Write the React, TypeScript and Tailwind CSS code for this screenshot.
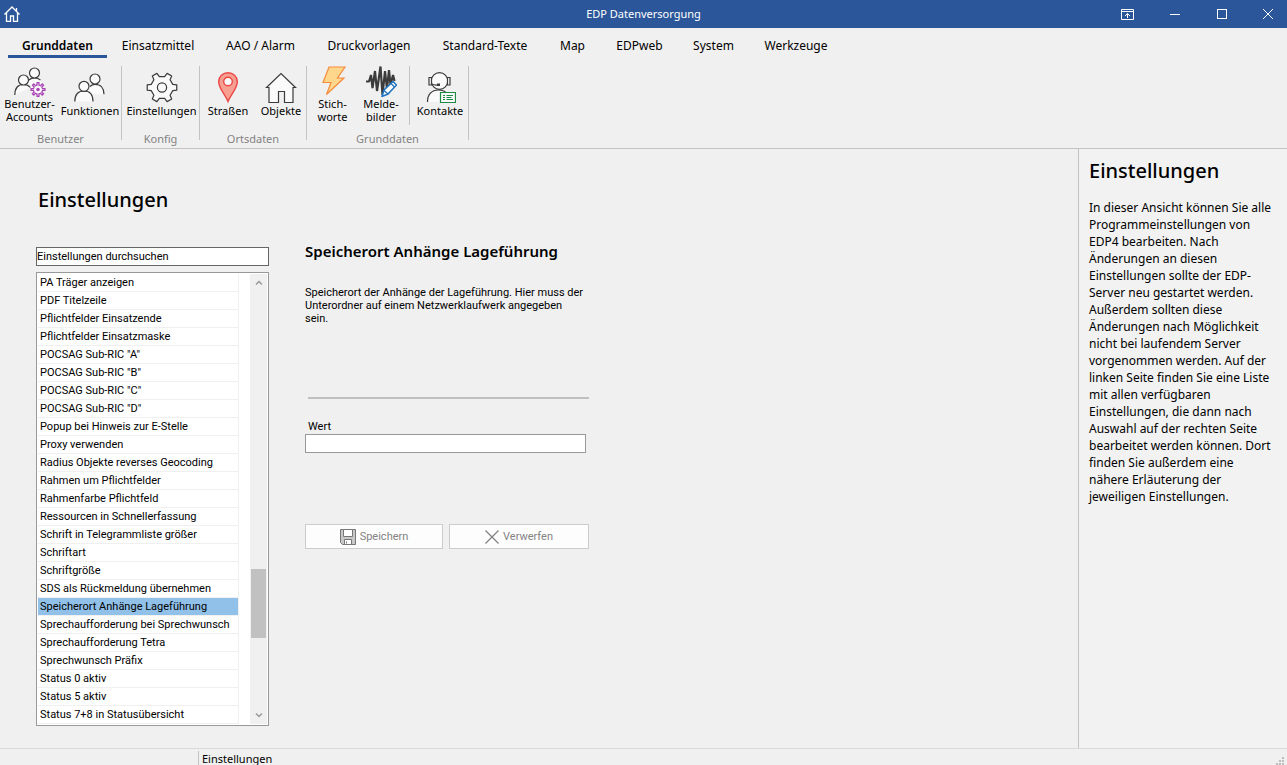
import type { ReactNode } from "react";

const tabs = [
  { label: "Grunddaten", width: "w-[99px]" },
  { label: "Einsatzmittel", width: "w-[102px]" },
  { label: "AAO / Alarm", width: "w-[103px]" },
  { label: "Druckvorlagen", width: "w-[114px]" },
  { label: "Standard-Texte", width: "w-[118px]" },
  { label: "Map", width: "w-[57px]" },
  { label: "EDPweb", width: "w-[77px]" },
  { label: "System", width: "w-[71px]" },
  { label: "Werkzeuge", width: "w-[94px]" },
];

const settings = [
  "PA Träger anzeigen",
  "PDF Titelzeile",
  "Pflichtfelder Einsatzende",
  "Pflichtfelder Einsatzmaske",
  'POCSAG Sub-RIC "A"',
  'POCSAG Sub-RIC "B"',
  'POCSAG Sub-RIC "C"',
  'POCSAG Sub-RIC "D"',
  "Popup bei Hinweis zur E-Stelle",
  "Proxy verwenden",
  "Radius Objekte reverses Geocoding",
  "Rahmen um Pflichtfelder",
  "Rahmenfarbe Pflichtfeld",
  "Ressourcen in Schnellerfassung",
  "Schrift in Telegrammliste größer",
  "Schriftart",
  "Schriftgröße",
  "SDS als Rückmeldung übernehmen",
  "Speicherort Anhänge Lageführung",
  "Sprechaufforderung bei Sprechwunsch",
  "Sprechaufforderung Tetra",
  "Sprechwunsch Präfix",
  "Status 0 aktiv",
  "Status 5 aktiv",
  "Status 7+8 in Statusübersicht",
];

const selected = "Speicherort Anhänge Lageführung";

/** Outline of a cog wheel around (cx, cy). */
function gearPath(cx: number, cy: number, inner: number, outer: number, teeth: number) {
  const step = 360 / teeth;
  const corners: [number, number][] = [
    [-0.27, inner],
    [-0.17, outer],
    [0.17, outer],
    [0.27, inner],
  ];
  const points: string[] = [];
  for (let i = 0; i < teeth; i++) {
    for (const [offset, radius] of corners) {
      const angle = ((i + offset) * step * Math.PI) / 180;
      points.push(`${(cx + radius * Math.cos(angle)).toFixed(2)} ${(cy + radius * Math.sin(angle)).toFixed(2)}`);
    }
  }
  return `M${points.join("L")}Z`;
}

function Icon({ children }: { children: ReactNode }) {
  return (
    <svg
      className="size-8 shrink-0"
      viewBox="0 0 32 32"
      fill="#fafafa"
      stroke="#3b3b3b"
      strokeWidth="1.2"
      aria-hidden="true"
    >
      {children}
    </svg>
  );
}

function AccountsIcon() {
  return (
    <Icon>
      <path d="M13 15.500c2-2.300 4-3 7-3s5.500 1 7.500 3.500v7H17z" stroke="none" />
      <path d="M15 15c1.500-1.500 3-2.200 5.500-2.200s4.500.8 6 2.400" fill="none" />
      <circle cx="20.500" cy="8" r="5" />
      <path d="M.8 30c0-7 3.500-10.500 8.700-10.500 3 0 5.200 1 6.800 3" />
      <circle cx="9.500" cy="15" r="5" />
      <path d={gearPath(24, 24.5, 4.6, 7, 8)} stroke="#a946b5" strokeWidth="1.300" />
      <circle cx="24" cy="24.500" r="1.800" fill="#a946b5" stroke="none" />
    </Icon>
  );
}

function UsersIcon() {
  return (
    <Icon>
      <path d="M15 15c1.500-1.800 3.500-2.700 6-2.700 5.500 0 9 3.700 9 10H17z" stroke="none" />
      <path d="M16 14.500c1.500-1.500 3-2.200 5-2.200 5.500 0 9 3.700 9 10" fill="none" />
      <circle cx="21" cy="7" r="5" />
      <path d="M.8 29.500c0-7 3.500-10.500 9.200-10.500s9 3.500 9 10.500" />
      <circle cx="10" cy="14.300" r="5" />
    </Icon>
  );
}

function GearIcon() {
  return (
    <Icon>
      <path d={gearPath(16, 15.5, 11.2, 15, 6)} strokeLinejoin="round" />
      <circle cx="16" cy="15.500" r="4.600" />
    </Icon>
  );
}

function PinIcon() {
  return (
    <Icon>
      <g stroke="#ea4747" strokeWidth="1.400">
        <path
          d="M16 29.500C13.500 22.500 6.700 17 6.700 9.800 6.700 4.500 10.800.8 16 .8s9.300 3.700 9.300 9C25.300 17 18.500 22.500 16 29.500z"
          fill="#f79f90"
        />
        <circle cx="16" cy="9.500" r="4.300" fill="#fafafa" />
      </g>
    </Icon>
  );
}

function HouseIcon() {
  return (
    <Icon>
      <path d="M1.500 15.500 16 1.500 30.500 15.500H28V30.500h-8.500V19.500h-6v11H4V15.500z" />
    </Icon>
  );
}

function BoltIcon() {
  return (
    <Icon>
      <path d="M12 2h16l-7.500 11h6.500L9.500 29.500 14 17.500H6z" fill="#ffd78c" stroke="#f58b3c" />
    </Icon>
  );
}

function WaveIcon() {
  return (
    <Icon>
      <path
        d="M1 16.500h3L6 10l1.500 13L10 6l2 20L15.500 1.500 17.500 30 20 6l2 18L24 5l1.500 15L28 10l1.500 6"
        fill="none"
        strokeWidth="2.200"
        strokeLinejoin="bevel"
      />
      <path d="m17 31.500 2-6.500L28 16.500l3.500 3.500-8.500 9z" stroke="#1e74c0" strokeWidth="1.500" />
      <path d="m26 18.500 3.500 3.500M19 25.500l4 3.500" stroke="#1e74c0" fill="none" />
    </Icon>
  );
}

function ContactIcon() {
  return (
    <Icon>
      <path d="M3.500 30c0-7.500 4.500-12 12-12 3.500 0 6 .8 8 2.500V30z" stroke="none" />
      <path d="M3.500 30c0-7.500 4-12 11-12 3 0 5 .6 7 1.800" fill="none" />
      <circle cx="15.500" cy="9" r="8.300" />
      <path d="M7.500 5.500H5v7.500h2.500zM23.500 5.500H26v7.500h-2.500z" />
      <path d="M7.500 12c2 1 4 1.200 6 1" fill="none" />
      <path d="M13 11.500h3v2.500h-3z" fill="#3b3b3b" stroke="none" />
      <path d="M16.500 20.500h15v10h-15z" stroke="#1f8a43" />
      <path d="M19 23.500h2M22.500 23.500h6.500M19 25.500h2M22.500 25.500h5M19 27.500h2M22.500 27.500h6.500" stroke="#1f8a43" />
    </Icon>
  );
}

function RibbonButton({ icon, lines, width }: { icon: ReactNode; lines: string[]; width: string }) {
  return (
    <button
      type="button"
      className={`flex h-full flex-col items-center justify-center whitespace-nowrap text-[11px] leading-[13px] text-black ${width}`}
    >
      {icon}
      {lines.map((line) => (
        <span key={line}>{line}</span>
      ))}
    </button>
  );
}

function RibbonGroup({ label, width, children }: { label: string; width: string; children: ReactNode }) {
  return (
    <section className={`flex flex-col border-r border-[#c3c3c3] ${width}`} aria-label={label}>
      <div className="flex h-14">{children}</div>
      <div className="mt-3.5 h-1 text-center text-[11px] leading-[6px] text-[#838383]">{label}</div>
    </section>
  );
}

function TitleBar() {
  return (
    <header className="grid h-7 shrink-0 grid-cols-[1fr_auto_1fr] items-center bg-[#2b579a] text-white">
      <button type="button" aria-label="Startseite" className="ml-1 w-4">
        <svg className="size-4" viewBox="0 0 16 16" fill="none" stroke="currentColor" strokeWidth="1.300">
          <path d="M.5 8.500 8 1l7.500 7.500M2.500 7v8.300h4V10h3v5.300h4V7M12.500 5V2" />
        </svg>
      </button>
      <h1 className="text-[11px]">EDP Datenversorgung</h1>
      <div className="flex justify-end">
        <button type="button" aria-label="Menüband ausblenden" className="flex h-7 w-[47px] items-center justify-center">
          <svg className="h-[11px] w-[13px]" viewBox="0 0 13 11" fill="none" stroke="currentColor">
            <path d="M.5.500h12v10H.500zM.500 2.500h12M6.500 9V4.500M4 7l2.500-2.500L9 7" />
          </svg>
        </button>
        <button type="button" aria-label="Minimieren" className="flex h-7 w-[47px] items-center justify-center">
          <span className="h-px w-2.5 bg-white" />
        </button>
        <button type="button" aria-label="Maximieren" className="flex h-7 w-[47px] items-center justify-center">
          <span className="size-2.5 border border-white" />
        </button>
        <button type="button" aria-label="Schließen" className="flex h-7 w-[42px] items-center justify-center pl-1">
          <svg className="size-2.5" viewBox="0 0 10 10" stroke="currentColor">
            <path d="m0 0 10 10M10 0 0 10" />
          </svg>
        </button>
      </div>
    </header>
  );
}

export default function App() {
  return (
    <div className="flex min-h-screen flex-col bg-[#f0f0f0] font-['Noto_Sans','Open_Sans',sans-serif] text-black">
      <TitleBar />
      <nav className="flex h-[30px] shrink-0 pl-2" aria-label="Hauptmenü">
        {tabs.map((tab, i) => (
          <button
            key={tab.label}
            type="button"
            className={`whitespace-nowrap border-b-3 pt-2 text-[12px] ${tab.width} ${
              i === 0 ? "border-[#2b579a] font-semibold" : "border-transparent"
            }`}
          >
            {tab.label}
          </button>
        ))}
      </nav>
      <div className="flex h-[91px] shrink-0 border-b border-[#c3c3c3] pb-2 pt-2">
        <RibbonGroup label="Benutzer" width="w-[122px]">
          <RibbonButton icon={<AccountsIcon />} lines={["Benutzer-", "Accounts"]} width="w-[59px]" />
          <RibbonButton icon={<UsersIcon />} lines={["Funktionen"]} width="w-[62px]" />
        </RibbonGroup>
        <RibbonGroup label="Konfig" width="w-[78px]">
          <RibbonButton icon={<GearIcon />} lines={["Einstellungen"]} width="w-full pl-0.5" />
        </RibbonGroup>
        <RibbonGroup label="Ortsdaten" width="w-[107px]">
          <RibbonButton icon={<PinIcon />} lines={["Straßen"]} width="w-14" />
          <RibbonButton icon={<HouseIcon />} lines={["Objekte"]} width="w-[50px]" />
        </RibbonGroup>
        <RibbonGroup label="Grunddaten" width="w-[162px]">
          <RibbonButton icon={<BoltIcon />} lines={["Stich-", "worte"]} width="w-[51px]" />
          <RibbonButton icon={<WaveIcon />} lines={["Melde-", "bilder"]} width="w-[46px]" />
          <div className="ml-[5px] h-[59px] w-px bg-[#c3c3c3]" />
          <RibbonButton icon={<ContactIcon />} lines={["Kontakte"]} width="w-[58px] pl-0.5" />
        </RibbonGroup>
      </div>

      <div className="flex flex-1">
        <main className="flex-1 pl-9 pt-9">
          <h2 className="pl-0.5 text-[20px] leading-[30px] font-medium">Einstellungen</h2>
          <div className="mt-8 flex gap-9 font-['Roboto',sans-serif]">
            <div className="w-[233px] shrink-0">
              <input
                type="text"
                aria-label="Einstellungen durchsuchen"
                defaultValue="Einstellungen durchsuchen"
                className="block h-[19px] w-full border border-[#666] bg-white pb-px text-[11px] leading-4 outline-none"
              />
              <div className="mt-1.5 flex justify-between border border-[#999] bg-white p-px">
                <ul className="w-[201px] border-r border-[#f0f0f0]">
                  {settings.map((name) => (
                    <li key={name} className="h-[18px] border-b border-[#f0f0f0]">
                      <button
                        type="button"
                        className={`block h-[17px] w-full whitespace-nowrap pt-px pl-0.5 text-left text-[11px] leading-4 ${
                          name === selected ? "bg-[#91c1e9]" : ""
                        }`}
                      >
                        {name}
                      </button>
                    </li>
                  ))}
                </ul>
                <div className="flex w-[17px] flex-col items-center bg-[#f0f0f0]" aria-hidden="true">
                  <svg className="my-1.5 h-1.5 w-2" viewBox="0 0 8 6" fill="none" stroke="#999" strokeWidth="1.500">
                    <path d="M1 4.500 4 1.500 7 4.500" />
                  </svg>
                  <div className="grow-[277]" />
                  <div className="h-[69px] w-[15px] bg-[#c1c1c1]" />
                  <div className="grow-[68]" />
                  <svg className="my-1.5 h-1.5 w-2" viewBox="0 0 8 6" fill="none" stroke="#999" strokeWidth="1.500">
                    <path d="M1 1.500 4 4.500 7 1.500" />
                  </svg>
                </div>
              </div>
            </div>

            <form className="w-[284px]">
              <h3 className="-mt-2 font-['Noto_Sans',sans-serif] text-[15px] leading-6 font-semibold whitespace-nowrap">
                Speicherort Anhänge Lageführung
              </h3>
              <p className="mt-[23px] h-[111px] whitespace-nowrap text-[11px] leading-[13px]">
                Speicherort der Anhänge der Lageführung. Hier muss der
                <br />
                Unterordner auf einem Netzwerklaufwerk angegeben
                <br />
                sein.
              </p>
              <div className="ml-[3px] h-0.5 bg-[#c0c0c0]" />
              <label htmlFor="wert" className="mt-[21px] ml-[3px] block text-[11px] leading-[14px]">
                Wert
              </label>
              <input
                id="wert"
                type="text"
                className="block h-[19px] w-[281px] border border-[#999] bg-white px-1 text-[11px] outline-none"
              />
              <div className="mt-[71px] flex gap-1.5">
                <button
                  type="button"
                  className="flex h-[25px] w-[138px] items-center justify-center gap-1 border border-[#ccc] bg-[#fdfdfd] text-[11px] text-[#838383]"
                >
                  <svg className="size-4" viewBox="0 0 16 16" fill="#c8c8c8" stroke="#777">
                    <path d="M.5.500h15v15H2.500l-2-2z" />
                    <path d="M3.500.500h9v7h-9zM4.500 10.500h7v5h-7z" fill="#fff" />
                    <path d="M6.500 12.500v2" />
                  </svg>
                  <span className="pt-0.5">Speichern</span>
                </button>
                <button
                  type="button"
                  className="flex h-[25px] w-[140px] items-center justify-center gap-1 border border-[#ccc] bg-[#fdfdfd] text-[11px] text-[#838383]"
                >
                  <svg className="size-3.5" viewBox="0 0 14 14" stroke="#838383" strokeWidth="1.300">
                    <path d="m.5.500 13 13M13.500.500l-13 13" />
                  </svg>
                  <span className="pt-0.5">Verwerfen</span>
                </button>
              </div>
            </form>
          </div>
        </main>
        <aside className="w-[209px] shrink-0 border-l border-[#c3c3c3] bg-[#f2f2f2] pl-2.5 pt-[7px]">
          <h2 className="text-[20px] leading-[30px] font-medium">Einstellungen</h2>
          <p className="mt-[13px] whitespace-nowrap text-[12px] leading-[17px]">
            In dieser Ansicht können Sie alle
            <br />
            Programmeinstellungen von
            <br />
            EDP4 bearbeiten. Nach
            <br />
            Änderungen an diesen
            <br />
            Einstellungen sollte der EDP-
            <br />
            Server neu gestartet werden.
            <br />
            Außerdem sollten diese
            <br />
            Änderungen nach Möglichkeit
            <br />
            nicht bei laufendem Server
            <br />
            vorgenommen werden. Auf der
            <br />
            linken Seite finden Sie eine Liste
            <br />
            mit allen verfügbaren
            <br />
            Einstellungen, die dann nach
            <br />
            Auswahl auf der rechten Seite
            <br />
            bearbeitet werden können. Dort
            <br />
            finden Sie außerdem eine
            <br />
            nähere Erläuterung der
            <br />
            jeweiligen Einstellungen.
          </p>
        </aside>
      </div>

      <footer className="flex h-[17px] shrink-0 items-end justify-between overflow-hidden border-t border-[#d9d9d9]">
        <div className="ml-[198px] h-3.5 border-l border-[#c3c3c3] pl-[3px] text-[11px] leading-4">
          Einstellungen
        </div>
        <svg className="mr-[3px] h-2 w-2" viewBox="0 0 8 8" fill="#bdbdbd" aria-hidden="true">
          <path d="M6 0h2v2H6zM3 3h2v2H3zM6 3h2v2H6zM0 6h2v2H0zM3 6h2v2H3zM6 6h2v2H6z" />
        </svg>
      </footer>
    </div>
  );
}
